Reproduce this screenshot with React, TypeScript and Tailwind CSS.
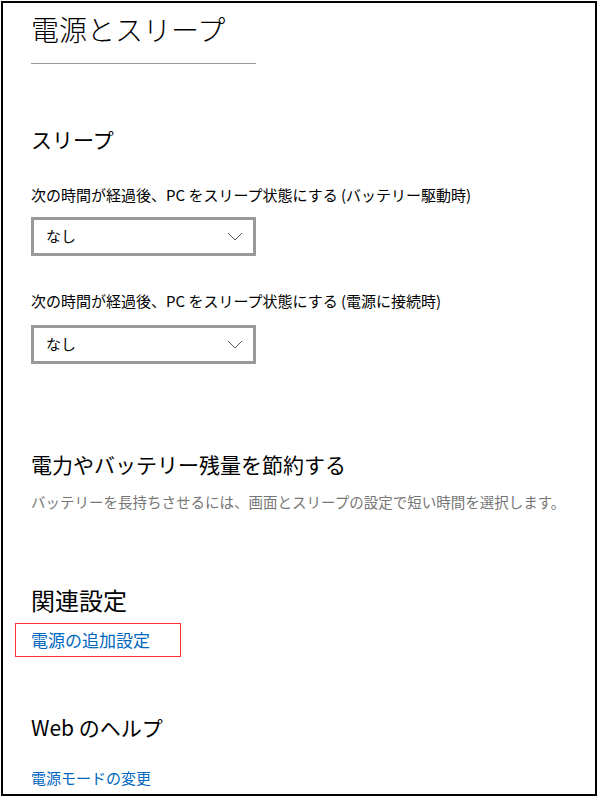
const font = { fontFamily: '"Noto Sans CJK JP", "Noto Sans", sans-serif' };

function Dropdown({ value, top }: { value: string; top: string }) {
  return (
    <div className={`${top} flex h-[39px] w-[225px] items-center justify-between border-[3px] border-[#999999] bg-white pl-[12px] pr-[10px]`}>
      <span className="text-[15px] text-black">{value}</span>
      <svg width="16" height="9" viewBox="0 0 16 9" fill="none">
        <path d="M1 1l7 7 7-7" stroke="#555" strokeWidth="1" />
      </svg>
    </div>
  );
}

export default function App() {
  return (
    <div className="bg-white">
      <div
        className="ml-px mt-px flex h-[795px] w-[596px] flex-col overflow-hidden border-2 border-black pl-[28px] text-black"
        style={font}
      >
        {/* TITLE */}
        <h1 className="mt-[6px] text-[28px] font-light leading-[40px]">電源とスリープ</h1>
        <div className="mt-[14px] h-px w-[225px] bg-[#999999]" />

        {/* SLEEP */}
        <h2 className="mt-[60px] text-[21px] leading-[30px]">スリープ</h2>
        <p className="mt-[31px] text-[15px] leading-[20px]">
          次の時間が経過後、PC をスリープ状態にする (バッテリー駆動時)
        </p>
        <Dropdown value="なし" top="mt-[12px]" />

        <p className="mt-[35px] text-[15px] leading-[20px]">
          次の時間が経過後、PC をスリープ状態にする (電源に接続時)
        </p>
        <Dropdown value="なし" top="mt-[14px]" />

        {/* SAVE POWER */}
        <h2 className="mt-[85px] text-[21px] leading-[30px]">電力やバッテリー残量を節約する</h2>
        <p className="mt-[13px] text-[14.5px] leading-[20px] text-[#767676]">
          バッテリーを長持ちさせるには、画面とスリープの設定で短い時間を選択します。
        </p>

        {/* RELATED */}
        <h2 className="mt-[73px] text-[24px] leading-[30px]">関連設定</h2>
        <div className="-ml-[16px] mt-[8px] flex h-[34px] w-[166px] items-center border border-[#ff3333] pl-[15px]">
          <a className="text-[17px] text-[#0067c0]">電源の追加設定</a>
        </div>

        {/* WEB HELP */}
        <h2 className="mt-[55px] text-[21px] leading-[30px]">Web のヘルプ</h2>
        <a className="mt-[26px] text-[15px] leading-[20px] text-[#0067c0]">電源モードの変更</a>
      </div>
    </div>
  );
}
